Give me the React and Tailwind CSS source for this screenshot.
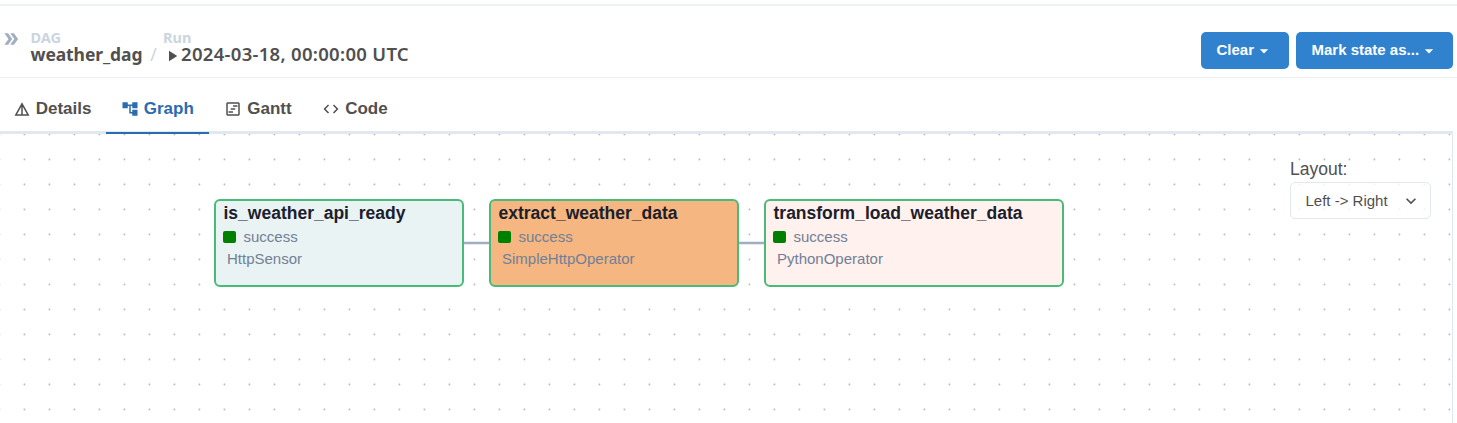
import {
  MdAccountTree,
  MdArrowDropDown,
  MdCode,
  MdDetails,
  MdDoubleArrow,
  MdOutlineViewTimeline,
  MdPlayArrow,
} from 'react-icons/md';

const TABS = [
  { label: 'Details', Icon: MdDetails, cls: 'w-[106px] pl-[13.5px] text-[#51504f]' },
  { label: 'Graph', Icon: MdAccountTree, cls: 'w-[103px] pl-[15.5px] text-[#2b6cb0] border-b-2 border-[#2b6cb0]' },
  { label: 'Gantt', Icon: MdOutlineViewTimeline, cls: 'w-[99px] pl-[16px] text-[#51504f]' },
  { label: 'Code', Icon: MdCode, cls: 'w-[96px] pl-[15px] text-[#51504f]' },
];

const NODES = [
  { id: 'is_weather_api_ready', operator: 'HttpSensor', cls: 'left-[214px] w-[250px] bg-[#e9f3f4]' },
  { id: 'extract_weather_data', operator: 'SimpleHttpOperator', cls: 'left-[489px] w-[250px] bg-[#f5b681]' },
  { id: 'transform_load_weather_data', operator: 'PythonOperator', cls: 'left-[764px] w-[300px] bg-[#fff1ed]' },
];

function Header() {
  return (
    <header className="flex h-[72px] justify-between border-b border-[#edf0f3]">
      <div className="flex pt-[23px] font-['Noto_Sans',sans-serif] font-bold text-[#51504f]">
        <MdDoubleArrow className="ml-px size-[20px] text-[#a0aec0]" />
        <div className="ml-[9.5px] w-[119.5px]">
          <div className="h-[16px] text-[14.5px] leading-[16px] text-[#cbd5e0]">DAG</div>
          <div className="flex h-[20px] text-[17.5px] leading-[18px]">
            <span className="w-[112px] whitespace-nowrap tracking-[-0.1px]">weather_dag</span>
            <span className="ml-[8px] font-normal text-[#cbd5e0]">/</span>
          </div>
        </div>
        <div className="ml-[13px]">
          <div className="h-[16px] text-[14.5px] leading-[16px] text-[#cbd5e0]">Run</div>
          <div className="flex h-[20px] whitespace-nowrap text-[18.5px] font-semibold leading-[18px]">
            <MdPlayArrow className="mt-[2px] size-[18px]" />
            <span className="tracking-[0.3px]">2024-03-18, 00:00:00 UTC</span>
          </div>
        </div>
      </div>
      <div className="flex gap-[7px] pr-1 pt-[26px] text-[15px] font-bold text-white">
        <button className="flex h-[37px] w-[88px] items-center rounded-[5px] bg-[#3182ce] pl-[15.5px]">
          Clear
          <MdArrowDropDown className="size-[20px]" />
        </button>
        <button className="flex h-[37px] w-[157px] items-center whitespace-nowrap rounded-[5px] bg-[#3182ce] pl-[15.5px]">
          Mark state as...
          <MdArrowDropDown className="size-[20px]" />
        </button>
      </div>
    </header>
  );
}

function Tabs() {
  return (
    <nav className="flex h-[56px] w-[1453px] bg-[linear-gradient(#e2e8f0,#e2e8f0)] bg-[length:100%_3px] bg-bottom bg-no-repeat">
      {TABS.map(({ label, Icon, cls }) => (
        <div key={label} className={`flex h-full items-start pt-[18px] ${cls}`}>
          <Icon className="mt-[4px] -ml-[0.6px] size-[18px] shrink-0" />
          <span className="ml-[4.8px] text-[17px] font-bold leading-[25px]">{label}</span>
        </div>
      ))}
    </nav>
  );
}

function TaskNode({ id, operator, cls }) {
  return (
    <div className={`absolute top-[65px] h-[88px] rounded-[6px] border-2 border-[#48bb78] pl-[7px] ${cls}`}>
      <div className="h-[24px] pl-[0.5px] text-[17.5px] font-bold leading-[24px] text-[#1a202c]">{id}</div>
      <div className="flex h-[24px] items-center text-[15px] text-[#718096]">
        <span className="mr-[7.5px] h-[12px] w-[13px] rounded-[2px] bg-[#008000]" />
        success
      </div>
      <div className="pl-[4px] text-[15px] leading-[19px] text-[#718096]">{operator}</div>
    </div>
  );
}

function Graph() {
  return (
    <main className="relative h-[289px] w-[1453px] overflow-hidden border-r border-[#dfe6ee]">
      <svg className="absolute inset-0 size-full">
        <defs>
          <pattern id="dots" x="11.9" y="-12.1" width="25" height="25" patternUnits="userSpaceOnUse">
            <circle cx="12.5" cy="12.5" r="0.9" fill="#b1b1b7" />
          </pattern>
        </defs>
        <rect width="100%" height="100%" fill="url(#dots)" />
        <path d="M464 109H489M739 109H764" stroke="#a0aec0" strokeWidth="2.5" />
      </svg>
      {NODES.map((node) => (
        <TaskNode key={node.id} {...node} />
      ))}
      <div className="absolute left-[1290px] top-[24px] w-[141px] text-[#51504f]">
        <div className="h-[24px] text-[17.5px] leading-[23px]">Layout:</div>
        <div className="flex h-[37px] items-center justify-between rounded-[5px] border border-[#e2e8f0] bg-white/80 pl-[14.5px] pr-[9px] pt-[1px] text-[15px]">
          Left -&gt; Right
          <svg className="mb-px size-[20px]" viewBox="0 0 24 24" fill="currentColor">
            <path d="M16.59 8.59L12 13.17 7.41 8.59 6 10l6 6 6-6z" />
          </svg>
        </div>
      </div>
    </main>
  );
}

export default function App() {
  return (
    <div className="h-[423px] overflow-hidden bg-white pt-1 font-['Liberation_Sans',Arial,sans-serif]">
      <div className="h-[2px] bg-[#edf2f7]" />
      <Header />
      <Tabs />
      <Graph />
    </div>
  );
}
